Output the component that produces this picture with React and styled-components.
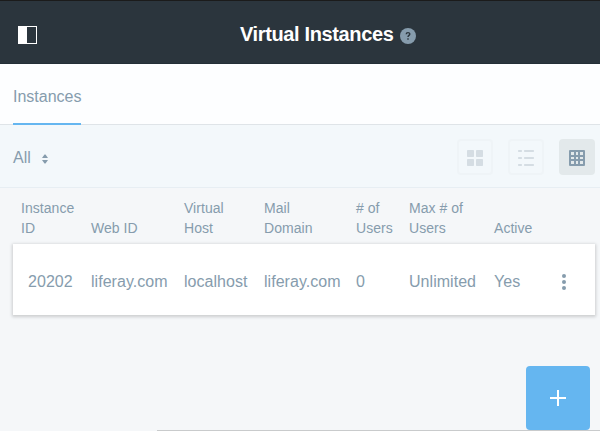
import React from 'react';
import styled, { createGlobalStyle } from 'styled-components';

const GlobalStyle = createGlobalStyle`
  * { box-sizing: border-box; }
  body { margin: 0; overflow: hidden; }
`;

const Page = styled.div`
  width: 600px;
  height: 431px;
  display: flex;
  flex-direction: column;
  overflow: hidden;
  background: #f5f7f9;
  color: #869cad;
  font: 16px/24px 'Liberation Sans', Arial, sans-serif;
  white-space: nowrap;
`;

const Header = styled.header`
  flex: none;
  height: 64px;
  padding: 0 17px;
  border-top: 1px solid #1b1b1b;
  border-bottom: 1px solid #242f37;
  background: #2b353d;
  display: grid;
  grid-template-columns: 223px 1fr;
  align-items: center;
`;

const PanelToggle = styled.button`
  width: 21px;
  height: 20px;
  margin-top: 6px;
  padding: 0;
  border: 0;
  background: none;
  display: flex;
`;

const TitleGroup = styled.div`
  display: flex;
  align-items: center;
  gap: 7px;
  padding-top: 5px;
`;

const Title = styled.h1`
  margin: 0 0 2px;
  color: #fff;
  font-size: 20px;
  letter-spacing: -0.37px;
  line-height: 24px;
  width: 153px;
`;

const HelpIcon = styled.svg`
  display: block;
  margin-top: 2px;
`;

const TabBar = styled.nav`
  flex: none;
  height: 61px;
  padding: 0 13px;
  background: #fdfeff;
  border-bottom: 1px solid #dfe4e8;
  display: flex;
`;

const Tab = styled.div`
  width: 68px;
  height: 61px;
  padding-top: 21px;
  border-bottom: 2px solid #65b6f0;
`;

const Toolbar = styled.div`
  flex: none;
  height: 63px;
  padding: 0 5px 0 13px;
  background: #f3f8fb;
  border-bottom: 1px solid #e7eef3;
  display: flex;
  align-items: center;
  justify-content: space-between;
`;

const Filter = styled.div`
  display: flex;
  align-items: center;
  gap: 11px;
  padding-top: 3px;
  svg { margin-top: 3px; }
`;

const ViewSwitch = styled.div`
  display: flex;
  gap: 15px;
  padding-top: 1px;
`;

const ViewButton = styled.button`
  width: 36px;
  height: 36px;
  padding: 0;
  border: 2px solid ${(p) => (p.$active ? '#e3e9eb' : '#eff4f7')};
  border-radius: 4px;
  background: ${(p) => (p.$active ? '#e3e9eb' : 'transparent')};
  color: ${(p) => (p.$active ? '#869cad' : '#d5dde3')};
  display: grid;
  place-items: center;
  svg { margin-top: 2px; }
`;

const TableRow = styled.div`
  display: grid;
  grid-template-columns: 70px 93px 80px 92px 53px 85px 65px 1fr;
  letter-spacing: 0.04px;
`;

const HeadRow = styled(TableRow)`
  flex: none;
  height: 56px;
  padding: 10px 5px 0 21px;
  font-size: 14px;
  line-height: 20px;
  align-items: end;
  align-content: start;
`;

const HeadCell = styled.div`
  white-space: pre-line;
`;

const Card = styled(TableRow)`
  flex: none;
  width: 582px;
  height: 71px;
  margin-left: 13px;
  padding: 5px 0 0 8px;
  align-items: center;
  background: #fff;
  box-shadow: 0 1px 3px 1px rgba(0, 0, 0, 0.17);
`;

const Cell = styled.div`
  padding-left: ${(p) => (p.$inset ? '7px' : '0')};
`;

const Actions = styled.button`
  width: 10px;
  height: 20px;
  padding: 0;
  border: 0;
  background: none;
  display: flex;
  justify-content: center;
  align-items: center;
`;

const Footer = styled.footer`
  margin-top: auto;
  display: flex;
  flex-direction: column;
  align-items: flex-end;
`;

const AddButton = styled.button`
  width: 64px;
  height: 64px;
  margin-right: 10px;
  padding: 0;
  border: 0;
  border-radius: 4px;
  background: #65b6f0;
  display: grid;
  place-items: center;
`;

const FooterRule = styled.div`
  width: 443px;
  height: 1px;
  background: #c9cbcc;
`;

const headings = ['Instance\nID', 'Web ID', 'Virtual\nHost', 'Mail\nDomain', '# of\nUsers', 'Max # of\nUsers', 'Active'];
const instance = ['20202', 'liferay.com', 'localhost', 'liferay.com', '0', 'Unlimited', 'Yes'];

const CardsIcon = () => (
  <svg width="16" height="16" fill="currentColor">
    <rect width="7" height="7" rx=".7" />
    <rect x="9" width="7" height="7" rx=".7" />
    <rect y="9" width="7" height="7" rx=".7" />
    <rect x="9" y="9" width="7" height="7" rx=".7" />
  </svg>
);

const ListIcon = () => (
  <svg width="16" height="16" fill="currentColor">
    {[0, 7, 14].map((y) => (
      <g key={y}>
        <rect y={y} width="4" height="2" rx=".7" />
        <rect x="6" y={y} width="10" height="2" rx=".7" />
      </g>
    ))}
  </svg>
);

const GridIcon = () => (
  <svg width="16" height="16">
    <rect width="16" height="16" rx="1" fill="currentColor" />
    {[[2, 3], [7, 2], [11, 3]].map(([x, w]) =>
      [[2, 3], [7, 2], [11, 3]].map(([y, h]) => (
        <rect key={`${x}-${y}`} x={x} y={y} width={w} height={h} fill="#e3e9eb" />
      ))
    )}
  </svg>
);

export default function App() {
  return (
    <Page>
      <GlobalStyle />
      <Header>
        <PanelToggle aria-label="Toggle menu">
          <svg width="21" height="20">
            <rect x="1.5" y="1.5" width="18" height="17" fill="none" stroke="#fff" />
            <rect x="1" y="1" width="9" height="18" fill="#fff" />
          </svg>
        </PanelToggle>
        <TitleGroup>
          <Title>Virtual Instances</Title>
          <HelpIcon width="16" height="16">
            <circle cx="8" cy="8" r="8" fill="#869cad" />
            <path d="M6.2 6.3C6.3 4.1 9.8 4.1 9.8 6.1C9.8 7.3 8 7.5 8 9M8 10.3V11.8" fill="none" stroke="#2b353d" strokeWidth="1.4" />
          </HelpIcon>
        </TitleGroup>
      </Header>
      <TabBar>
        <Tab>Instances</Tab>
      </TabBar>
      <Toolbar>
        <Filter>
          All
          <svg width="6" height="10" fill="#869cad">
            <path d="M0 4L2.5 0.5H3.5L6 4ZM0 6H6L3.5 9.5H2.5Z" />
          </svg>
        </Filter>
        <ViewSwitch>
          <ViewButton aria-label="Cards"><CardsIcon /></ViewButton>
          <ViewButton aria-label="List"><ListIcon /></ViewButton>
          <ViewButton aria-label="Table" $active><GridIcon /></ViewButton>
        </ViewSwitch>
      </Toolbar>
      <HeadRow>
        {headings.map((h) => <HeadCell key={h}>{h}</HeadCell>)}
      </HeadRow>
      <Card>
        {instance.map((value, i) => <Cell key={i} $inset={i === 0}>{value}</Cell>)}
        <Actions aria-label="Actions">
          <svg width="4" height="16" fill="#869cad">
            <circle cx="2" cy="2" r="2" />
            <circle cx="2" cy="8" r="2" />
            <circle cx="2" cy="14" r="2" />
          </svg>
        </Actions>
      </Card>
      <Footer>
        <AddButton aria-label="Add">
          <svg width="16" height="16" fill="#fff">
            <rect x="7" width="2" height="16" />
            <rect y="7" width="16" height="2" />
          </svg>
        </AddButton>
        <FooterRule />
      </Footer>
    </Page>
  );
}
